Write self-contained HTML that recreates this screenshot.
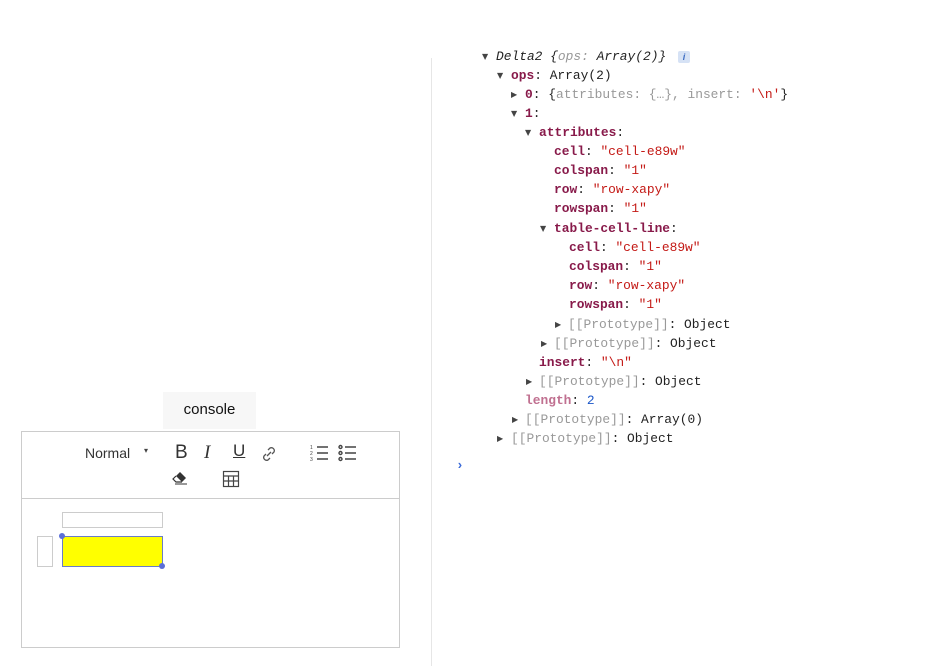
<!DOCTYPE html>
<html><head><meta charset="utf-8"><style>
body{margin:0;width:926px;height:666px;background:#fff;position:relative;overflow:hidden;font-family:"Liberation Sans",sans-serif}
.l{position:absolute;font-family:"Liberation Mono",monospace;font-size:12.9px;line-height:16px;white-space:pre;color:#222}
.k{color:#881a4a;font-weight:bold}
.kl{color:#c07090;font-weight:bold}
.s{color:#c41a16}
.g{color:#999}
.n{color:#1a56c8}
.t{position:absolute;font-size:8px;color:#444;font-family:"DejaVu Sans",sans-serif}
.ed{position:absolute;left:21px;top:431px;width:377px;height:215px;border:1px solid #ccc}
.ic{position:absolute}
</style></head><body>
<div style="position:absolute;left:431px;top:58px;width:1px;height:608px;background:#e6e6e6"></div>

<div style="position:absolute;left:163px;top:392px;width:93px;height:37px;background:#f7f7f7"></div>
<div style="position:absolute;left:163px;top:401px;width:93px;text-align:center;font-size:15px;color:#111">console</div>

<div class="ed">
<div style="position:absolute;left:0;top:66px;width:377px;height:1px;background:#ccc"></div>
<div style="position:absolute;left:63px;top:13px;font-size:14px;color:#333">Normal</div>
<div style="position:absolute;left:122px;top:14px;font-size:8px;color:#444">▾</div>
<div style="position:absolute;left:153px;top:10px;font-size:19px;color:#333">B</div>
<div style="position:absolute;left:182px;top:10px;font-size:19px;color:#333;font-family:'Liberation Serif',serif;font-style:italic">I</div>
<div style="position:absolute;left:211px;top:9px;font-size:17px;color:#333;text-decoration:underline">U</div>
<svg class="ic" style="left:237px;top:12px" width="20" height="20" viewBox="0 0 20 20" fill="none" stroke="#555" stroke-width="1.3"><path d="M8 12 L12 8"/><path d="M9 6 l2-2 a3 3 0 0 1 4 4 l-2 2"/><path d="M11 14 l-2 2 a3 3 0 0 1-4-4 l2-2"/></svg>
<svg class="ic" style="left:288px;top:12px" width="20" height="18" viewBox="0 0 20 18" stroke="#444" stroke-width="1.4"><path d="M7 3h11M7 9h11M7 15h11"/><text x="0" y="5" font-size="5" stroke="none" fill="#444">1</text><text x="0" y="11" font-size="5" stroke="none" fill="#444">2</text><text x="0" y="17" font-size="5" stroke="none" fill="#444">3</text></svg>
<svg class="ic" style="left:316px;top:12px" width="20" height="18" viewBox="0 0 20 18" stroke="#444" stroke-width="1.4" fill="none"><path d="M7 3h11M7 9h11M7 15h11"/><circle cx="2.5" cy="3" r="1.5"/><circle cx="2.5" cy="9" r="1.5"/><circle cx="2.5" cy="15" r="1.5"/></svg>
<svg class="ic" style="left:150px;top:38px" width="18" height="16" viewBox="0 0 18 16"><path d="M8 2 L14 8 L10 12 L4 6Z" fill="#333"/><path d="M4 6 L1 9 L4 12 L10 12" fill="none" stroke="#333" stroke-width="1.2"/><path d="M3 14h12" stroke="#333" stroke-width="1"/></svg>
<svg class="ic" style="left:200px;top:38px" width="18" height="18" viewBox="0 0 18 18" fill="none" stroke="#444" stroke-width="1.2"><rect x="1.5" y="1.5" width="15" height="15"/><path d="M1.5 6h15M1.5 11h15M6.5 6v10.5M11.5 6v10.5"/></svg>
<div style="position:absolute;left:40px;top:80px;width:99px;height:14px;border:1px solid #ccc"></div>
<div style="position:absolute;left:15px;top:104px;width:14px;height:29px;border:1px solid #ccc"></div>
<div style="position:absolute;left:40px;top:104px;width:99px;height:29px;border:1px solid #6a7cc8;background:#ff0"></div>
<div style="position:absolute;left:37px;top:101px;width:6px;height:6px;border-radius:3px;background:#5b6fd8"></div>
<div style="position:absolute;left:137px;top:131px;width:6px;height:6px;border-radius:3px;background:#5b6fd8"></div>
</div>

<div class="l" style="left:482px;top:49px"><span class="t">▼</span></div>
<div class="l" style="left:496px;top:49px;font-style:italic">Delta2 {<span class="g">ops:</span> Array(2)}</div>
<div style="position:absolute;left:678px;top:51px;width:12px;height:12px;background:#d6e2f5;border-radius:2px;font-size:9px;color:#3a6ac0;text-align:center;line-height:12px;font-weight:bold;font-style:italic">i</div>

<div class="l" style="left:497px;top:68px"><span class="t">▼</span></div><div class="l" style="left:511px;top:68px"><span class="k">ops</span>: Array(2)</div>
<div class="l" style="left:511px;top:87px"><span class="t">▶</span></div><div class="l" style="left:525px;top:87px"><span class="k">0</span>: {<span class="g">attributes: {…}, insert: </span><span class="s">'\n'</span>}</div>
<div class="l" style="left:511px;top:106px"><span class="t">▼</span></div><div class="l" style="left:525px;top:106px"><span class="k">1</span>:</div>
<div class="l" style="left:525px;top:125px"><span class="t">▼</span></div><div class="l" style="left:539px;top:125px"><span class="k">attributes</span>:</div>
<div class="l" style="left:554px;top:144px"><span class="k">cell</span>: <span class="s">"cell-e89w"</span></div>
<div class="l" style="left:554px;top:163px"><span class="k">colspan</span>: <span class="s">"1"</span></div>
<div class="l" style="left:554px;top:182px"><span class="k">row</span>: <span class="s">"row-xapy"</span></div>
<div class="l" style="left:554px;top:201px"><span class="k">rowspan</span>: <span class="s">"1"</span></div>
<div class="l" style="left:540px;top:221px"><span class="t">▼</span></div><div class="l" style="left:554px;top:221px"><span class="k">table-cell-line</span>:</div>
<div class="l" style="left:569px;top:240px"><span class="k">cell</span>: <span class="s">"cell-e89w"</span></div>
<div class="l" style="left:569px;top:259px"><span class="k">colspan</span>: <span class="s">"1"</span></div>
<div class="l" style="left:569px;top:278px"><span class="k">row</span>: <span class="s">"row-xapy"</span></div>
<div class="l" style="left:569px;top:297px"><span class="k">rowspan</span>: <span class="s">"1"</span></div>
<div class="l" style="left:555px;top:317px"><span class="t">▶</span></div><div class="l" style="left:568px;top:317px"><span class="g">[[Prototype]]</span>: Object</div>
<div class="l" style="left:541px;top:336px"><span class="t">▶</span></div><div class="l" style="left:554px;top:336px"><span class="g">[[Prototype]]</span>: Object</div>
<div class="l" style="left:539px;top:355px"><span class="k">insert</span>: <span class="s">"\n"</span></div>
<div class="l" style="left:526px;top:374px"><span class="t">▶</span></div><div class="l" style="left:539px;top:374px"><span class="g">[[Prototype]]</span>: Object</div>
<div class="l" style="left:525px;top:393px"><span class="kl">length</span>: <span class="n">2</span></div>
<div class="l" style="left:512px;top:412px"><span class="t">▶</span></div><div class="l" style="left:525px;top:412px"><span class="g">[[Prototype]]</span>: Array(0)</div>
<div class="l" style="left:497px;top:431px"><span class="t">▶</span></div><div class="l" style="left:511px;top:431px"><span class="g">[[Prototype]]</span>: Object</div>
<div class="l" style="left:456px;top:458px;color:#3a6ad8;font-weight:bold">›</div>
</body></html>
